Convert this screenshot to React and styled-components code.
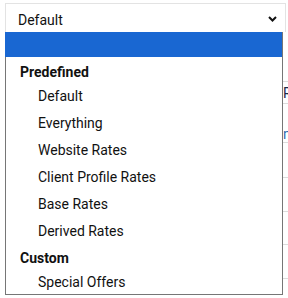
import React from 'react';
import styled, { createGlobalStyle } from 'styled-components';

const GlobalStyle = createGlobalStyle`
  body {
    margin: 0;
    background: #fff;
    font-family: Roboto, 'Liberation Sans', sans-serif;
  }
`;

const groups = [
  {
    label: 'Predefined',
    options: [
      'Default',
      'Everything',
      'Website Rates',
      'Client Profile Rates',
      'Base Rates',
      'Derived Rates',
    ],
  },
  { label: 'Custom', options: ['Special Offers'] },
];

const bgRows = [
  { h: 22, text: 'R', link: false },
  { h: 39, text: 'n', link: true },
  { h: 35 },
  { h: 34 },
  { h: 33 },
  { h: 34 },
  { h: 34 },
];

const App = () => {
  return (
    <Page>
      <GlobalStyle />
      <SelectBox>
        <span>Default</span>
        <svg width="9" height="6" viewBox="0 0 9 6">
          <path
            d="M1 1 L4.5 4.5 L8 1"
            fill="none"
            stroke="#111"
            strokeWidth="2"
          />
        </svg>
      </SelectBox>
      <Content>
        {bgRows.map((r, i) => (
          <BgRow key={i} style={{ height: r.h }}>
            {r.text && <BgText $link={r.link}>{r.text}</BgText>}
          </BgRow>
        ))}
        <CheckRow>
          <Check />
          <CheckLabel>Best Available Rate</CheckLabel>
        </CheckRow>
      </Content>
      <ListBox>
        <Highlight />
        {groups.map((g) => (
          <React.Fragment key={g.label}>
            <GroupLabel>{g.label}</GroupLabel>
            {g.options.map((o) => (
              <Option key={o}>{o}</Option>
            ))}
          </React.Fragment>
        ))}
      </ListBox>
    </Page>
  );
};

const Page = styled.div`
  position: relative;
  width: 288px;
  height: 298px;
  overflow: hidden;
`;

const SelectBox = styled.div`
  margin: 3px 2px 0 5px;
  height: 29px;
  box-sizing: border-box;
  border: 1px solid #e3e3e3;
  border-bottom: none;
  display: flex;
  align-items: center;
  justify-content: space-between;
  padding: 0 8px 0 12px;
  font-size: 14px;
  color: #111;
  span {
    padding-top: 3px;
  }
  svg {
    margin-top: 2px;
  }
`;

const Content = styled.div`
  padding-top: 49px;
  padding-left: 60px;
`;

const BgRow = styled.div`
  border-top: 1px solid #dcdcdc;
  box-sizing: border-box;
  display: flex;
  justify-content: flex-end;
  align-items: center;
`;

const BgText = styled.span`
  font-size: 14px;
  color: ${(p) => (p.$link ? '#2b6cb0' : '#1a2b4a')};
  width: 5px;
  overflow: hidden;
  margin-top: ${(p) => (p.$link ? '22px' : '0')};
`;

const CheckRow = styled.div`
  display: flex;
  align-items: center;
  gap: 14px;
  padding: 6px 0 0 10px;
`;

const Check = styled.div`
  width: 8px;
  height: 8px;
  background: #1c5fa8;
  border-radius: 1px;
`;

const CheckLabel = styled.span`
  font-size: 14px;
  color: #4a6fa5;
`;

const ListBox = styled.div`
  position: absolute;
  top: 32px;
  left: 5px;
  width: 278px;
  box-sizing: border-box;
  background: #fff;
  border: 1px solid #767676;
  border-top: none;
  font-size: 14px;
  color: #111;
`;

const Highlight = styled.div`
  height: 25px;
  background: #1967d2;
  margin-left: -1px;
`;

const GroupLabel = styled.div`
  height: 24px;
  box-sizing: border-box;
  padding: 5px 0 0 14px;
  display: flex;
  align-items: center;
  font-weight: 700;
`;

const Option = styled.div`
  height: 27px;
  box-sizing: border-box;
  padding: 3px 0 0 32px;
  display: flex;
  align-items: center;
`;

export default App;
